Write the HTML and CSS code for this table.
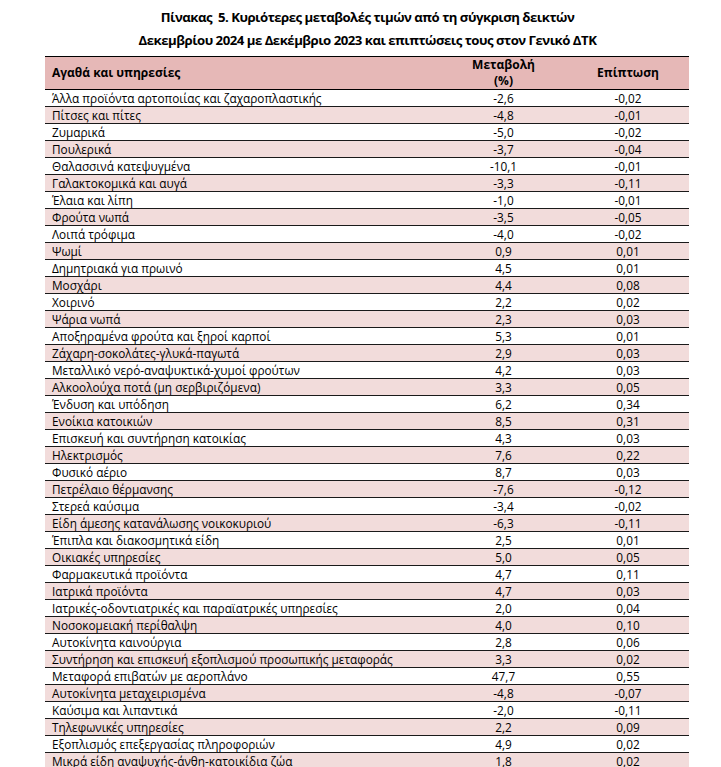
FILE: index.html
```html
<!DOCTYPE html>
<html lang="el">
<head>
<meta charset="utf-8">
<title>Πίνακας 5</title>
<link rel="stylesheet" href="styles.css">
</head>
<body>
<div class="page">
  <h1 class="title">
    <span class="title-line">Πίνακας&nbsp; 5. Κυριότερες μεταβολές τιμών από τη σύγκριση δεικτών</span>
    <span class="title-line">Δεκεμβρίου 2024 με Δεκέμβριο 2023 και επιπτώσεις τους στον Γενικό ΔΤΚ</span>
  </h1>
  <table class="data">
    <thead>
      <tr>
        <th class="c-name">Αγαθά και υπηρεσίες</th>
        <th class="c-chg"><span class="hl">Μεταβολή</span><span class="hl">(%)</span></th>
        <th class="c-imp">Επίπτωση</th>
      </tr>
    </thead>
    <tbody>
      <tr><td class="c-name">Άλλα προϊόντα αρτοποιίας και ζαχαροπλαστικής</td><td class="c-chg">-2,6</td><td class="c-imp">-0,02</td></tr>
      <tr class="alt"><td class="c-name">Πίτσες και πίτες</td><td class="c-chg">-4,8</td><td class="c-imp">-0,01</td></tr>
      <tr><td class="c-name">Ζυμαρικά</td><td class="c-chg">-5,0</td><td class="c-imp">-0,02</td></tr>
      <tr class="alt"><td class="c-name">Πουλερικά</td><td class="c-chg">-3,7</td><td class="c-imp">-0,04</td></tr>
      <tr><td class="c-name">Θαλασσινά κατεψυγμένα</td><td class="c-chg">-10,1</td><td class="c-imp">-0,01</td></tr>
      <tr class="alt"><td class="c-name">Γαλακτοκομικά και αυγά</td><td class="c-chg">-3,3</td><td class="c-imp">-0,11</td></tr>
      <tr><td class="c-name">Έλαια και λίπη</td><td class="c-chg">-1,0</td><td class="c-imp">-0,01</td></tr>
      <tr class="alt"><td class="c-name">Φρούτα νωπά</td><td class="c-chg">-3,5</td><td class="c-imp">-0,05</td></tr>
      <tr><td class="c-name">Λοιπά τρόφιμα</td><td class="c-chg">-4,0</td><td class="c-imp">-0,02</td></tr>
      <tr class="alt"><td class="c-name">Ψωμί</td><td class="c-chg">0,9</td><td class="c-imp">0,01</td></tr>
      <tr><td class="c-name">Δημητριακά για πρωινό</td><td class="c-chg">4,5</td><td class="c-imp">0,01</td></tr>
      <tr class="alt"><td class="c-name">Μοσχάρι</td><td class="c-chg">4,4</td><td class="c-imp">0,08</td></tr>
      <tr><td class="c-name">Χοιρινό</td><td class="c-chg">2,2</td><td class="c-imp">0,02</td></tr>
      <tr class="alt"><td class="c-name">Ψάρια νωπά</td><td class="c-chg">2,3</td><td class="c-imp">0,03</td></tr>
      <tr><td class="c-name">Αποξηραμένα φρούτα και ξηροί καρποί</td><td class="c-chg">5,3</td><td class="c-imp">0,01</td></tr>
      <tr class="alt"><td class="c-name">Ζάχαρη-σοκολάτες-γλυκά-παγωτά</td><td class="c-chg">2,9</td><td class="c-imp">0,03</td></tr>
      <tr><td class="c-name">Μεταλλικό νερό-αναψυκτικά-χυμοί φρούτων</td><td class="c-chg">4,2</td><td class="c-imp">0,03</td></tr>
      <tr class="alt"><td class="c-name">Αλκοολούχα ποτά (μη σερβιριζόμενα)</td><td class="c-chg">3,3</td><td class="c-imp">0,05</td></tr>
      <tr><td class="c-name">Ένδυση και υπόδηση</td><td class="c-chg">6,2</td><td class="c-imp">0,34</td></tr>
      <tr class="alt"><td class="c-name">Ενοίκια κατοικιών</td><td class="c-chg">8,5</td><td class="c-imp">0,31</td></tr>
      <tr><td class="c-name">Επισκευή και συντήρηση κατοικίας</td><td class="c-chg">4,3</td><td class="c-imp">0,03</td></tr>
      <tr class="alt"><td class="c-name">Ηλεκτρισμός</td><td class="c-chg">7,6</td><td class="c-imp">0,22</td></tr>
      <tr><td class="c-name">Φυσικό αέριο</td><td class="c-chg">8,7</td><td class="c-imp">0,03</td></tr>
      <tr class="alt"><td class="c-name">Πετρέλαιο θέρμανσης</td><td class="c-chg">-7,6</td><td class="c-imp">-0,12</td></tr>
      <tr><td class="c-name">Στερεά καύσιμα</td><td class="c-chg">-3,4</td><td class="c-imp">-0,02</td></tr>
      <tr class="alt"><td class="c-name">Είδη άμεσης κατανάλωσης νοικοκυριού</td><td class="c-chg">-6,3</td><td class="c-imp">-0,11</td></tr>
      <tr><td class="c-name">Έπιπλα και διακοσμητικά είδη</td><td class="c-chg">2,5</td><td class="c-imp">0,01</td></tr>
      <tr class="alt"><td class="c-name">Οικιακές υπηρεσίες</td><td class="c-chg">5,0</td><td class="c-imp">0,05</td></tr>
      <tr><td class="c-name">Φαρμακευτικά προϊόντα</td><td class="c-chg">4,7</td><td class="c-imp">0,11</td></tr>
      <tr class="alt"><td class="c-name">Ιατρικά προϊόντα</td><td class="c-chg">4,7</td><td class="c-imp">0,03</td></tr>
      <tr><td class="c-name">Ιατρικές-οδοντιατρικές και παραϊατρικές υπηρεσίες</td><td class="c-chg">2,0</td><td class="c-imp">0,04</td></tr>
      <tr class="alt"><td class="c-name">Νοσοκομειακή περίθαλψη</td><td class="c-chg">4,0</td><td class="c-imp">0,10</td></tr>
      <tr><td class="c-name">Αυτοκίνητα καινούργια</td><td class="c-chg">2,8</td><td class="c-imp">0,06</td></tr>
      <tr class="alt"><td class="c-name">Συντήρηση και επισκευή εξοπλισμού προσωπικής μεταφοράς</td><td class="c-chg">3,3</td><td class="c-imp">0,02</td></tr>
      <tr><td class="c-name">Μεταφορά επιβατών με αεροπλάνο</td><td class="c-chg">47,7</td><td class="c-imp">0,55</td></tr>
      <tr class="alt"><td class="c-name">Αυτοκίνητα μεταχειρισμένα</td><td class="c-chg">-4,8</td><td class="c-imp">-0,07</td></tr>
      <tr><td class="c-name">Καύσιμα και λιπαντικά</td><td class="c-chg">-2,0</td><td class="c-imp">-0,11</td></tr>
      <tr class="alt"><td class="c-name">Τηλεφωνικές υπηρεσίες</td><td class="c-chg">2,2</td><td class="c-imp">0,09</td></tr>
      <tr><td class="c-name">Εξοπλισμός επεξεργασίας πληροφοριών</td><td class="c-chg">4,9</td><td class="c-imp">0,02</td></tr>
      <tr class="alt"><td class="c-name">Μικρά είδη αναψυχής-άνθη-κατοικίδια ζώα</td><td class="c-chg">1,8</td><td class="c-imp">0,02</td></tr>
    </tbody>
  </table>
</div>
</body>
</html>
```

FILE: styles.css
```css
html, body {
  margin: 0;
  padding: 0;
  background: #ffffff;
}

body {
  font-family: "Open Sans", "Noto Sans", "DejaVu Sans", sans-serif;
  color: #000000;
  overflow: hidden;
}

.page {
  width: 721px;
  height: 767px;
  padding-top: 6px;
  box-sizing: border-box;
}

.title {
  margin: 0 0 4px 0;
  font-size: 13.2px;
  font-weight: 700;
  letter-spacing: -0.5px;
  line-height: 23px;
  text-align: center;
  padding-left: 14px;
}

.title-line {
  display: block;
}

.data {
  margin-left: 45px;
  width: 644px;
  border-collapse: separate;
  border-spacing: 0;
  table-layout: fixed;
  font-size: 11.8px;
}

.data th {
  background: #e6b8b7;
  font-weight: 700;
  font-size: 12px;
  line-height: 16px;
  height: 32px;
  padding: 0;
  border-top: 1px solid #000000;
  border-bottom: 1px solid #000000;
  vertical-align: middle;
}

.hl {
  display: block;
  line-height: 16px;
}

.data td {
  height: 16px;
  line-height: 16px;
  padding: 0;
  border-bottom: 1px solid #1a1a1a;
  white-space: nowrap;
  vertical-align: bottom;
}

.data tr.alt td {
  background: #f2dcdb;
}

.data .c-name {
  width: 388px;
  text-align: left;
  padding-left: 7px;
}

.data .c-chg {
  width: 127px;
  text-align: center;
}

.data .c-imp {
  width: 122px;
  text-align: center;
}
```
